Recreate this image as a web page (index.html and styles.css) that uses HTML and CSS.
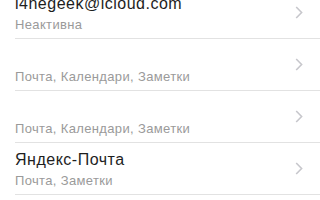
FILE: index.html
```html
<!DOCTYPE html>
<html lang="ru">
<head>
<meta charset="utf-8">
<link rel="stylesheet" href="styles.css">
</head>
<body>
<ul class="list">
  <li class="row"><div class="inner"><div class="text"><div class="title">i4negeek@icloud.com</div><div class="sub">Неактивна</div></div><svg class="chev" width="8" height="13" viewBox="0 0 8 13"><path d="M1.2 1 L6.6 6.5 L1.2 12" fill="none" stroke="#c7c7cc" stroke-width="1.6"/></svg></div></li>
  <li class="row"><div class="inner"><div class="text"><div class="title">&nbsp;</div><div class="sub">Почта, Календари, Заметки</div></div><svg class="chev" width="8" height="13" viewBox="0 0 8 13"><path d="M1.2 1 L6.6 6.5 L1.2 12" fill="none" stroke="#c7c7cc" stroke-width="1.6"/></svg></div></li>
  <li class="row"><div class="inner"><div class="text"><div class="title">&nbsp;</div><div class="sub">Почта, Календари, Заметки</div></div><svg class="chev" width="8" height="13" viewBox="0 0 8 13"><path d="M1.2 1 L6.6 6.5 L1.2 12" fill="none" stroke="#c7c7cc" stroke-width="1.6"/></svg></div></li>
  <li class="row"><div class="inner"><div class="text"><div class="title">Яндекс-Почта</div><div class="sub">Почта, Заметки</div></div><svg class="chev" width="8" height="13" viewBox="0 0 8 13"><path d="M1.2 1 L6.6 6.5 L1.2 12" fill="none" stroke="#c7c7cc" stroke-width="1.6"/></svg></div></li>
</ul>
</body>
</html>
```
FILE: styles.css
```css
html, body {
  margin: 0;
  padding: 0;
  background: #ffffff;
  overflow: hidden;
}
.list {
  list-style: none;
  margin: -13px 0 0 0;
  padding: 0;
  font-family: "Liberation Sans", Arial, sans-serif;
}
.row {
  padding-left: 15px;
}
.inner {
  height: 51px;
  border-bottom: 1px solid #e2e2e2;
  display: flex;
  align-items: flex-start;
  padding-right: 17px;
  box-sizing: border-box;
  height: 52px;
}
.text {
  flex: 1;
  padding-top: 7px;
}
.title {
  font-size: 16px;
  line-height: 20px;
  letter-spacing: 0.5px;
  color: #1e1e1e;
}
.sub {
  font-size: 13px;
  line-height: 16px;
  letter-spacing: 0.35px;
  margin-top: 3px;
  color: #9a9a9a;
}
.chev {
  display: block;
  align-self: center;
}
```
